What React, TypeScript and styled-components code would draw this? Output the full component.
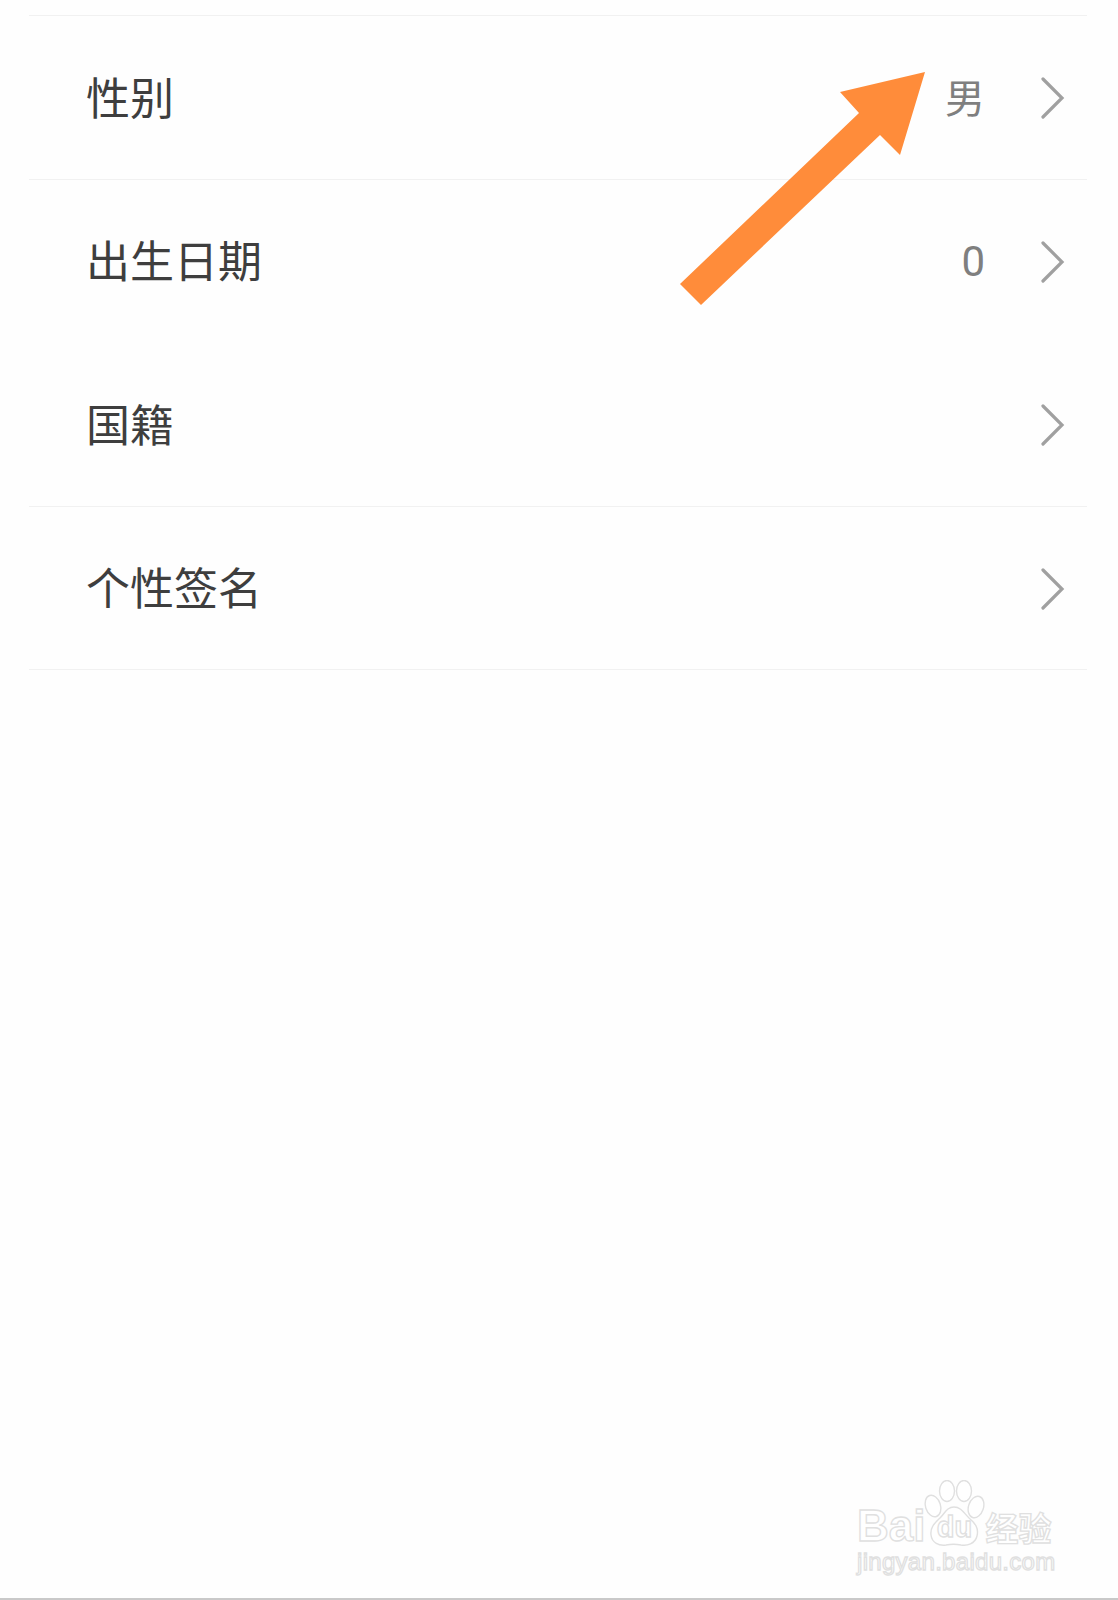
import React from "react";
import styled, { createGlobalStyle } from "styled-components";

const GlobalStyle = createGlobalStyle`
  html, body { margin: 0; padding: 0; background: #fefefe; }
`;

const Page = styled.main`
  position: relative;
  display: flex;
  flex-direction: column;
  width: 1118px;
  height: 1600px;
  box-sizing: border-box;
  padding-top: 15px;
  background: #fefefe;
  border-bottom: 2px solid #c9c9c9;
  overflow: hidden;
  font-family: "Noto Sans CJK SC", "Noto Sans", sans-serif;
`;

const List = styled.ul`
  list-style: none;
  margin: 0 31px 0 29px;
  padding: 0;
  border-top: 1px solid #f1f1f1;
`;

const Row = styled.li<{ $plain?: boolean }>`
  display: flex;
  align-items: center;
  height: 162.5px;
  padding: 0 22px 0 57px;
  border-bottom: 1px solid ${(p) => (p.$plain ? "transparent" : "#f1f1f1")};
`;

const Label = styled.span`
  flex: 1;
  padding-bottom: 3px;
  font-size: 44px;
  line-height: 1;
  color: #3e3e3e;
`;

const Value = styled.span<{ $numeric?: boolean }>`
  margin-right: 55px;
  padding: ${(p) => (p.$numeric ? "3px 0 0" : "0 0 2px")};
  font-family: ${(p) => (p.$numeric ? "Roboto, sans-serif" : "inherit")};
  font-size: ${(p) => (p.$numeric ? "42px" : "40px")};
  line-height: 1;
  color: #7f7f7f;
`;

const Chevron = styled.svg`
  flex: none;
  width: 25px;
  height: 42px;
  margin-top: 2px;
  fill: none;
  stroke: #a0a0a0;
  stroke-width: 3.2;
  stroke-linecap: round;
  stroke-linejoin: miter;
`;

const Pointer = styled.svg`
  position: absolute;
  top: 0;
  left: 0;
  width: 1118px;
  height: 320px;
  pointer-events: none;
`;

/* Faint outlined brand stamp laid over the page's lower right corner. */
const Watermark = styled.div`
  position: absolute;
  top: 1480px;
  left: 857px;
  display: flex;
  flex-direction: column;
  color: #ffffff;
  -webkit-text-stroke: 1.3px #e0e0e0;
`;

const BrandLine = styled.div`
  display: flex;
  align-items: flex-end;
`;

const Brand = styled.span`
  margin-right: -2px;
  font-family: "Liberation Sans", sans-serif;
  font-size: 44px;
  line-height: 1;
  font-weight: 700;
`;

const PawMark = styled.div`
  display: grid;
  place-items: end center;
  width: 62px;
  height: 68px;
`;

const PawShape = styled.svg`
  grid-area: 1 / 1;
  width: 62px;
  height: 68px;
  fill: #ffffff;
  stroke: #e0e0e0;
  stroke-width: 1.4;
`;

const PawText = styled.span`
  grid-area: 1 / 1;
  padding-bottom: 4px;
  font-family: "Liberation Sans", sans-serif;
  font-size: 29px;
  line-height: 34px;
  font-weight: 700;
`;

const Product = styled.span`
  margin-bottom: 4px;
  font-size: 33px;
  line-height: 1;
  font-weight: 700;
`;

const Domain = styled.span`
  font-family: "Liberation Sans", sans-serif;
  font-size: 24px;
  line-height: 28px;
  letter-spacing: 0.3px;
  white-space: nowrap;
`;

const rows = [
  { label: "性别", value: "男" },
  { label: "出生日期", value: "0", numeric: true, plain: true },
  { label: "国籍" },
  { label: "个性签名" },
];

export default function App() {
  return (
    <Page>
      <GlobalStyle />
      <List>
        {rows.map((row) => (
          <Row key={row.label} $plain={row.plain}>
            <Label>{row.label}</Label>
            {row.value && <Value $numeric={row.numeric}>{row.value}</Value>}
            <Chevron viewBox="0 0 25 42">
              <path d="M3 2 L22 21 L3 40" />
            </Chevron>
          </Row>
        ))}
      </List>

      <Pointer viewBox="0 0 1118 320">
        <polygon
          points="925,72 840,92 859,113 680,284 701,305 880,135 900,155"
          fill="#ff8c3a"
        />
      </Pointer>

      <Watermark>
        <BrandLine>
          <Brand>Bai</Brand>
          <PawMark>
            <PawShape viewBox="0 0 62 68">
              <ellipse cx="10" cy="26" rx="7.5" ry="11" transform="rotate(-18 10 26)" />
              <ellipse cx="24" cy="11" rx="7.5" ry="10.5" />
              <ellipse cx="41" cy="11" rx="7.5" ry="10.5" />
              <ellipse cx="53" cy="27" rx="7.5" ry="11" transform="rotate(18 53 27)" />
              <path d="M31 27 C38 27 41 33 46 38 C52 43 56 48 54 56 C52 64 44 66 38 65 C33 64 28 64 23 65 C16 66 9 63 8 55 C7 47 12 43 17 38 C22 33 24 27 31 27 Z" />
            </PawShape>
            <PawText>du</PawText>
          </PawMark>
          <Product>经验</Product>
        </BrandLine>
        <Domain>jingyan.baidu.com</Domain>
      </Watermark>
    </Page>
  );
}
